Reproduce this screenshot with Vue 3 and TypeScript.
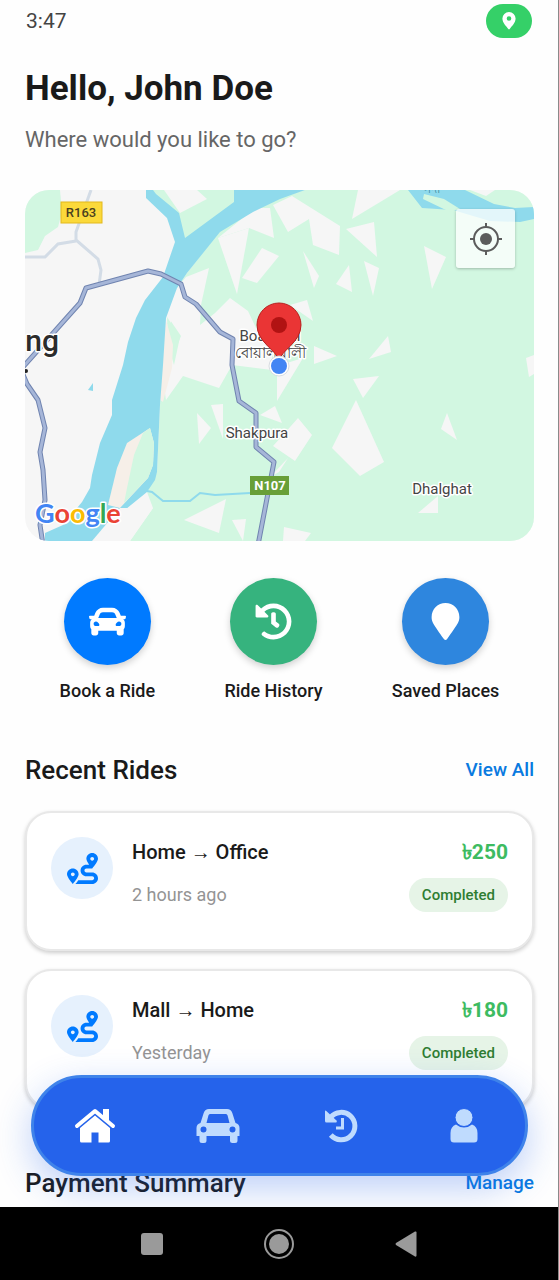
<script setup lang="ts">
interface QuickAction {
  label: string
  tone: string
  viewBox: string
  path: string
}

interface Ride {
  from: string
  to: string
  when: string
  fare: number
  status: string
}

const historyPath =
  'M504 255.531c.253 136.64-111.18 248.372-247.82 248.468-59.015.042-113.223-20.53-155.822-54.911-11.077-8.94-11.905-25.541-1.839-35.607l11.267-11.267c8.609-8.609 22.353-9.551 31.891-1.984C173.062 425.135 212.781 440 256 440c101.705 0 184-82.311 184-184 0-101.705-82.311-184-184-184-48.814 0-93.149 18.969-126.068 49.932l50.754 50.754c10.08 10.08 2.941 27.314-11.313 27.314H24c-8.837 0-16-7.163-16-16V38.627c0-14.254 17.234-21.393 27.314-11.314l49.372 49.372C129.209 34.136 189.552 8 256 8c136.81 0 247.747 110.781 248 247.531zm-180.912 78.784l9.823-12.63c8.138-10.463 6.253-25.542-4.21-33.679L288 256.349V152c0-13.255-10.745-24-24-24h-16c-13.255 0-24 10.745-24 24v135.651l65.409 50.874c10.463 8.137 25.541 6.253 33.679-4.21z'

const carPath =
  'M499.99 176h-59.87l-16.64-41.6C406.38 91.63 365.57 64 319.5 64h-127c-46.06 0-86.88 27.63-103.99 70.4L71.87 176H12.01C4.2 176-1.53 183.34.37 190.91l6 24C7.7 220.25 12.5 224 18.01 224h20.07C24.65 235.73 16 252.78 16 272v48c0 16.12 6.16 30.67 16 41.93V416c0 17.67 14.33 32 32 32h32c17.67 0 32-14.33 32-32v-32h256v32c0 17.67 14.33 32 32 32h32c17.67 0 32-14.33 32-32v-54.07c9.84-11.25 16-25.8 16-41.93v-48c0-19.22-8.65-36.27-22.07-48H494c5.51 0 10.31-3.75 11.64-9.09l6-24c1.89-7.57-3.84-14.91-11.65-14.91zm-352.06-17.83c7.29-18.22 24.94-30.17 44.57-30.17h127c19.63 0 37.28 11.95 44.57 30.17L384 208H128l19.93-49.83zM96 319.8c-19.2 0-32-12.76-32-31.9S76.8 256 96 256s48 28.71 48 47.85-28.8 15.95-48 15.95zm320 0c-19.2 0-48 3.19-48-15.95S396.8 256 416 256s32 12.76 32 31.9-12.8 31.9-32 31.9z'

const markerPath =
  'M172.268 501.67C26.97 291.031 0 269.413 0 192 0 85.961 85.961 0 192 0s192 85.961 192 192c0 77.413-26.97 99.031-172.268 309.67-9.535 13.774-29.93 13.773-39.464 0z'

const routePath =
  'M416 320h-96c-17.6 0-32-14.4-32-32s14.4-32 32-32h96s96-107 96-160-43-96-96-96-96 43-96 96c0 25.5 22.2 63.4 45.3 96H320c-52.9 0-96 43.1-96 96s43.1 96 96 96h96c17.6 0 32 14.4 32 32s-14.4 32-32 32H185.5c-16 24.8-33.8 47.7-47.3 64H416c52.9 0 96-43.1 96-96s-43.1-96-96-96zm0-256c17.7 0 32 14.3 32 32s-14.3 32-32 32-32-14.3-32-32 14.3-32 32-32zM96 256c-53 0-96 43-96 96s96 160 96 160 96-107 96-160-43-96-96-96zm0 128c-17.7 0-32-14.3-32-32s14.3-32 32-32 32 14.3 32 32-14.3 32-32 32z'

const actions: QuickAction[] = [
  { label: 'Book a Ride', tone: 'blue', viewBox: '0 0 512 512', path: carPath },
  { label: 'Ride History', tone: 'green', viewBox: '0 0 512 512', path: historyPath },
  { label: 'Saved Places', tone: 'sky', viewBox: '-64 0 512 512', path: markerPath },
]

const rides: Ride[] = [
  { from: 'Home', to: 'Office', when: '2 hours ago', fare: 250, status: 'Completed' },
  { from: 'Mall', to: 'Home', when: 'Yesterday', fare: 180, status: 'Completed' },
]

// Bare-land patches scattered over the green area of the map
const patches: string[] = [
  '218,238 249,228 237,294',
  '218,238 255,208 270,208 274,238 249,228',
  '262,248 279,256 257,283 242,278',
  '273,205 292,196 340,226 339,255 313,245 309,219 288,232',
  '358,190 400,190 352,219',
  '346,229 374,222 377,257',
  '303,251 319,276 314,288',
  '349,265 352,292 336,284',
  '364,261 379,268 373,296',
  '424,246 446,257 432,289',
  '290,305 307,300 313,321',
  '388,336 391,352 369,359',
  '314,346 337,356 314,364',
  '526,358 534,355 534,374 529,377',
  '353,379 379,376 363,398',
  '356,400 384,462 360,476 332,448',
  '447,413 457,440 441,429',
  '438,496 438,513 418,513',
  '284,527 311,533 305,541 283,541',
  '197,413 211,428 199,444',
  '211,405 223,404 223,439',
  '184,520 226,499 219,533',
  '232,520 246,519 243,541',
  '283,435 298,418 312,435 295,461 273,446',
  '270,477 288,458 279,472',
  '260,415 275,406 282,423',
  '277,366 303,358 277,401',
]
</script>

<template>
  <div class="phone">
    <header class="status">
      <time class="clock">3:47</time>
      <span class="gps" role="img" aria-label="Location in use">
        <svg viewBox="0 0 14 18" width="14" height="18">
          <path fill="#fff" fill-rule="evenodd" d="M7 0a6.6 6.6 0 0 1 6.6 6.6C13.600 11 9.500 14.500 7.700 17a.9.9 0 0 1-1.400 0C4.500 14.500.4 11 .4 6.600A6.600 6.600 0 0 1 7 0zm0 4.200a2.300 2.300 0 1 0 0 4.600 2.300 2.300 0 0 0 0-4.600z" />
        </svg>
      </span>
    </header>

    <main class="content">
      <h1>Hello, John Doe</h1>
      <p class="lead">Where would you like to go?</p>

      <section class="map" aria-label="Map">
        <svg class="map-art" viewBox="25 190 509 351" preserveAspectRatio="xMidYMid slice">
          <rect x="25" y="190" width="509" height="351" fill="#f6f6f6" />
          <g fill="#d2f7e1">
            <path d="M25 190H60L62 212L58 227L45 236L38 250L25 253Z" />
            <path d="M177 288L187 273L222 228L253 205L305 190H534V541H130L153 508L147 492L157 472L160 405L163 365Z" />
          </g>
          <path fill="#f6f6f6" d="M177 288L186 277L209 268L201 305L200 325L215 313L230 298L248 311L256 328L272 340V370L232 365L219 388L183 376L166 400L163 380L181 336L166 314Z" />
          <path fill="#d2f7e1" d="M167 317L180 337L174 365L168 345Z" />
          <polygon v-for="p in patches" :key="p" :points="p" fill="#f6f6f6" />
          <path fill="#f6efe8" d="M166 320L173 345L172 368L163 402L160 400L163 350Z" />
          <path fill="#8fdaec" fill-rule="evenodd" d="M146 190H305L280 199L253 212L220 232L187 273L177 288L166 318L163 365L160 405L157 472L155 480L147 492L110 522L93 541H45V533L63 525L82 502L90 488L92 475L100 443L112 415V400L123 365L128 342L136 318L145 300L163 277L175 242L167 218L146 198Z" />
          <path fill="#8fdaec" d="M88 390L93 383V391Z" />
          <path fill="#8fdaec" d="M408 190H465L494 204L515 208L534 207V219L520 222L490 221L453 210L422 208Z" />
          <path fill="#d2f7e1" d="M25 533L39 541H25Z" />
          <path fill="#d2f7e1" d="M153 190H234V202L185 238L179 213L156 194Z" />
          <path fill="#f6f6f6" d="M164 190H197L207 199L180 213Z" />
          <path fill="#d2f7e1" d="M424 194L444 199L460 209L450 212L423 199Z" />
          <path fill="#f6f6f6" d="M470 190H495L486 196Z" />
          <path fill="#f6efe8" d="M127 443L150 428L154 443L153 465L148 478L120 508L108 505L117 468Z" />
          <path fill="#d2f7e1" d="M143 433L150 428L154 443L153 465L148 478L124 503L127 488L134 455Z" />
          <path fill="#f6f6f6" d="M120 508H153L130 541H92Z" />
          <path fill="none" stroke="#8fdaec" stroke-width="2" d="M147 491L152 492L163 501H190L200 493L215 495L250 493" />
          <path fill="none" stroke="#d3dce6" stroke-width="3" d="M91 190L76 232V240L98 259L101 270L99 285M76 241L58 244L45 257H25" />
          <g fill="none" stroke-linejoin="round">
            <g stroke="#7084b0" stroke-width="5">
              <path d="M22 368L63 322L80 303L86 288L148 271L161 274L181 284L185 297L196 304L220 332L233 339L232 365L239 401L256 413V447L274 462L258 545" />
              <path d="M22 372L27 384L38 400L45 428L40 452L43 470L45 500L40 525L43 545" />
            </g>
            <g stroke="#a6b6d8" stroke-width="3">
              <path d="M22 368L63 322L80 303L86 288L148 271L161 274L181 284L185 297L196 304L220 332L233 339L232 365L239 401L256 413V447L274 462L258 545" />
              <path d="M22 372L27 384L38 400L45 428L40 452L43 470L45 500L40 525L43 545" />
            </g>
          </g>
          <rect x="61" y="202" width="41" height="21" fill="#fbd93a" stroke="#e2b81d" />
          <rect x="250" y="476" width="39" height="19" fill="#689f38" />
          <circle cx="26" cy="371" r="2" fill="#222" />
          <g class="labels">
            <text x="81" y="217" font-size="13" text-anchor="middle" class="plain">R163</text>
            <text x="270" y="490" font-size="13" text-anchor="middle" class="shield">N107</text>
            <text x="59" y="351" font-size="30" text-anchor="end" class="city">ng</text>
            <text x="270" y="341" font-size="15" text-anchor="middle">Boalkhali</text>
            <text x="270" y="358" font-size="15" text-anchor="middle">বোয়ালখালী</text>
            <text x="257" y="438" font-size="15" text-anchor="middle">Shakpura</text>
            <text x="442" y="494" font-size="15" text-anchor="middle">Dhalghat</text>
            <text x="432" y="193" font-size="12" text-anchor="middle" class="river">নদী</text>
          </g>
          <text x="35" y="523" class="google"><tspan fill="#4285f4">G</tspan><tspan fill="#ea4335">o</tspan><tspan fill="#fbbc04">o</tspan><tspan fill="#4285f4">g</tspan><tspan fill="#34a853">l</tspan><tspan fill="#ea4335">e</tspan></text>
          <path fill="#ea3535" stroke="#b8201f" d="M279 360C276 350 257 342 257 325A22 22 0 0 1 301 325C301 342 282 350 279 360Z" />
          <circle cx="279" cy="325" r="8" fill="#b11313" />
          <circle cx="279" cy="366" r="10" fill="#fff" stroke="#d8dde2" />
          <circle cx="279" cy="366" r="8" fill="#4285f4" />
        </svg>
        <button class="locate" type="button" aria-label="Show my location">
          <svg viewBox="0 0 34 34" width="34" height="34" fill="none" stroke="#5c5c5c" stroke-width="2">
            <circle cx="17" cy="17" r="12" />
            <circle cx="17" cy="17" r="6" fill="#5c5c5c" stroke="none" />
            <path d="M17 1v5M17 28v5M1 17h5M28 17h5" />
          </svg>
        </button>
      </section>

      <nav class="actions" aria-label="Quick actions">
        <button v-for="a in actions" :key="a.label" type="button" class="action">
          <span class="disc" :class="a.tone">
            <svg :viewBox="a.viewBox" width="37" height="37"><path :d="a.path" fill="#fff" /></svg>
          </span>
          <span class="action-label">{{ a.label }}</span>
        </button>
      </nav>

      <section class="recent">
        <div class="head">
          <h2>Recent Rides</h2>
          <a href="#rides">View All</a>
        </div>
        <ul class="rides">
          <li v-for="r in rides" :key="r.when" class="ride">
            <span class="ride-icon">
              <svg viewBox="0 0 512 512" width="31" height="31"><path :d="routePath" fill="#007aff" /></svg>
            </span>
            <div class="ride-body">
              <div class="row">
                <h3>{{ r.from }} → {{ r.to }}</h3>
                <strong class="fare">৳{{ r.fare }}</strong>
              </div>
              <div class="row">
                <span class="when">{{ r.when }}</span>
                <span class="badge">{{ r.status }}</span>
              </div>
            </div>
          </li>
        </ul>
      </section>

      <section class="payments">
        <div class="head">
          <h2>Payment Summary</h2>
          <a href="#payments">Manage</a>
        </div>
      </section>
    </main>

    <div class="dock">
      <nav class="tabs" aria-label="Main">
        <button type="button" class="tab active" aria-label="Home">
          <svg viewBox="0 0 44 36" width="44" height="36">
            <path fill="none" stroke="currentColor" stroke-width="4" stroke-linecap="round" stroke-linejoin="round" d="M4 18L22 3L40 18" />
            <path fill="currentColor" d="M30 1h6v13l-6-5zM22 7.500L37 20V33a1.500 1.500 0 0 1-1.500 1.500H25.500V24.500h-7v10H8.500A1.500 1.500 0 0 1 7 33V20z" />
          </svg>
        </button>
        <button type="button" class="tab" aria-label="Rides">
          <svg viewBox="0 0 44 36" width="44" height="36">
            <path fill="currentColor" fill-rule="evenodd" d="M13 1H31Q35 1 36.300 5L39.500 15Q43.500 16 43.500 20V28H41.500V32.500Q41.500 35 39 35H36.500Q34 35 34 32.500V28H10.500V32.500Q10.500 35 8 35H6Q3.500 35 3.500 32.500V28H.5V20Q.5 16 4.500 15L7.700 5Q9 1 13 1ZM14 6Q12.800 6 12.400 7.500L10.500 15H33.500L31.600 7.500Q31.200 6 30 6ZM7.500 18.500a3 3 0 1 0 0 6 3 3 0 0 0 0-6ZM36.500 18.500a3 3 0 1 0 0 6 3 3 0 0 0 0-6Z" />
          </svg>
        </button>
        <button type="button" class="tab" aria-label="History">
          <svg viewBox="0 0 34 36" width="34" height="36">
            <path fill="none" stroke="currentColor" stroke-width="5" d="M6.500 9.500A13.700 13.700 0 1 1 6.800 27" />
            <path fill="currentColor" d="M1 3.500Q1 2 2.300 3L12.500 12.500Q13.500 14.500 12 14.500H2.500Q1 14.500 1 13Z" />
            <path fill="none" stroke="currentColor" stroke-width="3" d="M18.500 10V20H12" />
          </svg>
        </button>
        <button type="button" class="tab" aria-label="Profile">
          <svg viewBox="0 0 34 36" width="34" height="36">
            <path fill="currentColor" d="M9 16.500Q12.500 19.500 17 19.500T25 16.500Q30.500 18.500 30.500 25V31Q30.500 34.500 27 34.500H7Q3.500 34.500 3.500 31V25Q3.500 18.500 9 16.500Z" />
            <circle cx="17" cy="9.500" r="9" fill="currentColor" stroke="#2563eb" />
          </svg>
        </button>
      </nav>
      <nav class="system" aria-label="System">
        <button type="button" aria-label="Recent apps">
          <svg viewBox="0 0 32 32" width="32" height="32"><rect x="5" y="5" width="22" height="22" rx="3" fill="#9a9a9a" /></svg>
        </button>
        <button type="button" aria-label="Home screen">
          <svg viewBox="0 0 32 32" width="32" height="32">
            <circle cx="16" cy="16" r="14" fill="none" stroke="#9a9a9a" stroke-width="2" />
            <circle cx="16" cy="16" r="10" fill="#9a9a9a" />
          </svg>
        </button>
        <button type="button" aria-label="Back">
          <svg viewBox="0 0 32 32" width="32" height="32"><path d="M6 15L25 3.500Q26.500 3 26.500 4.500V27.500Q26.500 29 25 28.500L6 17Q5 16 6 15Z" fill="#9a9a9a" /></svg>
        </button>
      </nav>
    </div>
  </div>
</template>

<style>
body {
  margin: 0;
}
</style>

<style scoped>
* {
  box-sizing: border-box;
}
.phone {
  position: relative;
  display: flex;
  flex-direction: column;
  height: 100vh;
  overflow: hidden;
  background: #fefefe;
  border-right: 1px solid #8a8a8a;
  color: #1a1a1a;
  font-family: Roboto, "Noto Sans", sans-serif;
}
button {
  padding: 0;
  border: 0;
  background: none;
  color: inherit;
  font: inherit;
  cursor: pointer;
}
svg {
  display: block;
}
h1,
h2,
h3,
p,
ul {
  margin: 0;
  padding: 0;
}
.status {
  flex: none;
  display: flex;
  align-items: center;
  justify-content: space-between;
  height: 42px;
  padding: 0 26px;
}
.clock {
  color: #444;
  font-size: 21px;
}
.gps {
  display: grid;
  place-items: center;
  width: 46px;
  height: 34px;
  border-radius: 17px;
  background: #35d068;
}
.content {
  flex: 1;
  min-height: 0;
  overflow: hidden;
  padding: 24px 24px 0 25px;
}
h1 {
  font-size: 35px;
  line-height: 46px;
  font-weight: 700;
}
.lead {
  margin-top: 12px;
  color: #666;
  font-size: 22px;
  line-height: 32px;
}
.map {
  position: relative;
  height: 351px;
  margin-top: 34px;
  overflow: hidden;
  border-radius: 24px;
}
.map-art {
  width: 100%;
  height: 100%;
}
.labels {
  fill: #444;
  stroke: #fff;
  stroke-width: 3px;
  stroke-linejoin: round;
  paint-order: stroke;
  font-family: Roboto, "Noto Sans", sans-serif;
}
.labels .plain {
  fill: #4a4020;
  stroke: none;
  font-weight: 500;
}
.labels .shield {
  fill: #fff;
  stroke: none;
  font-weight: 700;
}
.labels .city {
  fill: #2c2c2c;
  font-weight: 500;
}
.labels .river {
  fill: #2b7f94;
  stroke: none;
}
.google {
  font-family: Lato, sans-serif;
  font-size: 27px;
  font-weight: 700;
  stroke: #fff;
  stroke-width: 3px;
  stroke-linejoin: round;
  paint-order: stroke;
}
.locate {
  position: absolute;
  top: 19px;
  right: 19px;
  display: grid;
  place-items: center;
  width: 59px;
  height: 59px;
  border-radius: 3px;
  background: rgba(255, 255, 255, 0.75);
  box-shadow: 0 1px 3px rgba(0, 0, 0, 0.25);
}
.actions {
  display: flex;
  justify-content: space-around;
  margin-top: 37px;
}
.action {
  display: flex;
  flex-direction: column;
  align-items: center;
  gap: 14px;
}
.disc {
  display: grid;
  place-items: center;
  width: 87px;
  height: 87px;
  border-radius: 50%;
  box-shadow: 0 3px 7px rgba(0, 0, 0, 0.18);
}
.blue {
  background: #007aff;
}
.green {
  background: #36b37e;
}
.sky {
  background: #2e86de;
}
.action-label {
  font-size: 18px;
  line-height: 24px;
  font-weight: 500;
}
.recent {
  margin-top: 50px;
}
.payments {
  margin-top: 57px;
}
.head {
  display: flex;
  align-items: center;
  justify-content: space-between;
  line-height: 34px;
}
h2 {
  font-size: 26px;
  font-weight: 500;
}
.head a {
  color: #0a7ae0;
  font-size: 19px;
  font-weight: 500;
  text-decoration: none;
}
.rides {
  display: grid;
  gap: 18px;
  margin-top: 24px;
  list-style: none;
}
.ride {
  display: flex;
  align-items: flex-start;
  gap: 19px;
  min-height: 140px;
  padding: 24px;
  border: 2px solid #e8e8e8;
  border-radius: 26px;
  background: #fff;
  box-shadow: 0 2px 4px rgba(0, 0, 0, 0.2);
}
.ride-icon {
  flex: none;
  display: grid;
  place-items: center;
  width: 62px;
  height: 62px;
  border-radius: 50%;
  background: #e6f1fd;
}
.ride-body {
  flex: 1;
  display: grid;
  gap: 11px;
}
.row {
  display: flex;
  align-items: center;
  justify-content: space-between;
  line-height: 30px;
}
h3 {
  font-size: 20px;
  font-weight: 500;
}
.fare {
  color: #3dbb61;
  font-size: 21px;
  font-weight: 700;
}
.when {
  color: #949494;
  font-size: 18px;
}
.badge {
  padding: 0 13px;
  border-radius: 17px;
  background: #e6f4e7;
  color: #2e7d32;
  font-size: 15px;
  line-height: 34px;
  font-weight: 500;
}
.dock {
  position: absolute;
  right: 0;
  bottom: 0;
  left: 0;
}
.tabs {
  display: flex;
  align-items: center;
  height: 101px;
  margin: 0 30px 31px 31px;
  border: 3px solid #3f83ea;
  border-radius: 51px;
  background: #2563eb;
  box-shadow: 0 12px 36px rgba(37, 99, 235, 0.3);
}
.tab {
  flex: 1;
  display: grid;
  place-items: center;
  color: #bfdbfe;
}
.tab.active {
  color: #fff;
}
.system {
  position: relative;
  display: flex;
  justify-content: center;
  gap: 95px;
  height: 73px;
  margin-right: -1px;
  padding-right: 2px;
  background: #000;
}
</style>
